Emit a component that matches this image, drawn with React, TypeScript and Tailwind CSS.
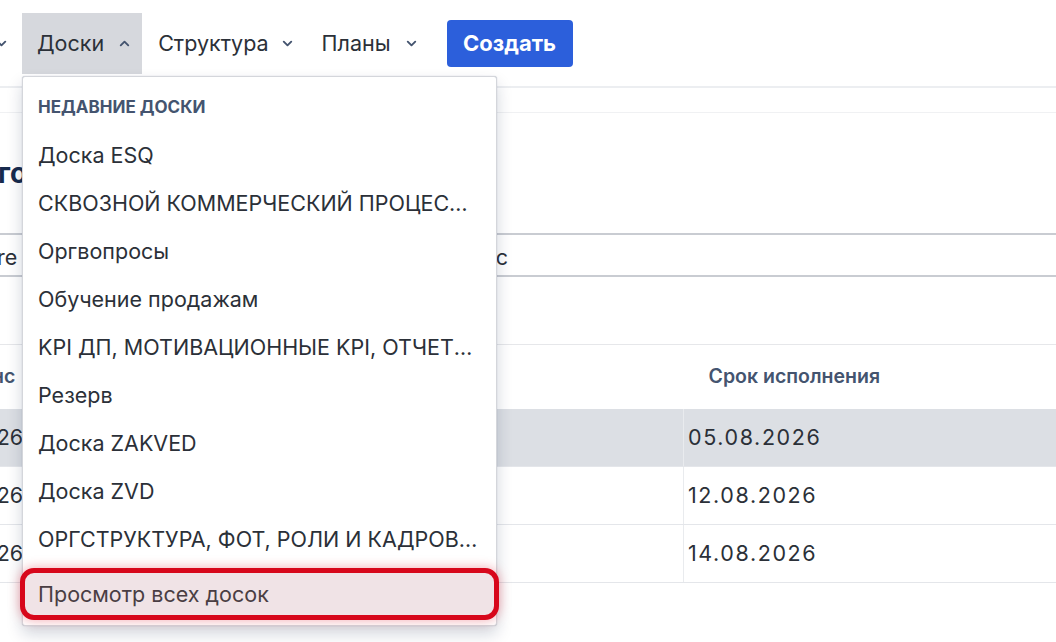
import React from 'react';
import { ChevronDown, ChevronUp } from 'lucide-react';

const recent = [
  'Доска ESQ',
  'СКВОЗНОЙ КОММЕРЧЕСКИЙ ПРОЦЕСС ПРОДАЖ',
  'Оргвопросы',
  'Обучение продажам',
  'KPI ДП, МОТИВАЦИОННЫЕ KPI, ОТЧЕТНОСТЬ',
  'Резерв',
  'Доска ZAKVED',
  'Доска ZVD',
  'ОРГСТРУКТУРА, ФОТ, РОЛИ И КАДРОВЫЙ РЕЗЕРВ',
];

const rows = [
  { date: '05.08.2026', active: true },
  { date: '12.08.2026', active: false },
  { date: '14.08.2026', active: false },
];

// ── Top navigation ─────────────────────────────────────────────
const NavBar = () => (
  <div className="flex items-center h-[88px] border-b-2 border-[#eceef1]">
    <ChevronDown size={15} strokeWidth={3} className="text-[#44546f] -ml-[6px] mr-[13px]" />
    <div className="h-[61px] flex items-center gap-[13px] pl-[15px] pr-[10px] bg-[#d6d8dd]">
      <span>Доски</span>
      <ChevronUp size={15} strokeWidth={3} className="text-[#44546f]" />
    </div>
    <div className="flex items-center gap-[11px] ml-[16px]">
      <span>Структура</span>
      <ChevronDown size={15} strokeWidth={3} className="text-[#44546f]" />
    </div>
    <div className="flex items-center gap-[13px] ml-[27px]">
      <span>Планы</span>
      <ChevronDown size={15} strokeWidth={3} className="text-[#44546f]" />
    </div>
    <button className="ml-[28px] h-[47px] w-[126px] rounded-[4px] bg-[#2c5fdb] text-white font-bold text-[22px]">
      Создать
    </button>
  </div>
);

// ── Page content behind the menu ───────────────────────────────
const Content = () => (
  <div className="flex flex-col">
    <div className="h-[25px] border-b border-[#f0f1f3]" />
    <div className="h-[120px] flex items-center">
      <span className="-ml-[2px] text-[28px] font-bold text-[#172b4d]">го</span>
    </div>
    <div className="h-[44px] border-y-2 border-[#c9ccd2] flex items-center justify-between pr-[548px] pt-[4px]">
      <span className="-ml-[3px]">re</span>
      <span>c</span>
    </div>
    <div className="h-[68px] border-b border-[#e6e7ea]" />
    <div className="h-[64px] flex items-center justify-between pr-[176px]">
      <span className="-ml-[8px] text-[19.5px] font-semibold text-[#44546f]">нс</span>
      <span className="text-[19.5px] font-semibold text-[#44546f]">Срок исполнения</span>
    </div>
    {rows.map((r, i) => (
      <div
        key={i}
        className={`h-[58px] flex items-stretch border-b border-[#e4e6ea] ${r.active ? 'bg-[#dcdfe4]' : ''}`}
      >
        <div className="w-[684px] flex items-center border-r border-[#e9ebee]">
          <span className="-ml-[30px]">2026</span>
        </div>
        <div className="flex items-center pl-[4px] tracking-[1.6px]">{r.date}</div>
      </div>
    ))}
  </div>
);

// ── Dropdown menu ──────────────────────────────────────────────
const BoardsMenu = () => (
  <div className="absolute left-[22px] top-[76px] w-[475px] bg-white border border-[#d4d6db] rounded-[3px] shadow-[0_8px_16px_rgba(9,30,66,0.18),0_0_1px_rgba(9,30,66,0.3)] pt-2 pb-[5px] text-[21.5px]">
    <div className="h-[46px] flex items-center px-[15px] text-[17px] font-bold text-[#44546f]">
      НЕДАВНИЕ ДОСКИ
    </div>
    {recent.map(b => (
      <div key={b} className="h-[48px] flex items-center px-[15px]">
        <span className="truncate">{b}</span>
      </div>
    ))}
    <div className="mt-[5px] -mx-[3px] h-[52px] flex items-center px-[13px] border-[5px] border-[#d7071b] rounded-[14px] bg-[#f0e3e6] text-[#4a3e43] shadow-[0_0_12px_rgba(215,7,27,0.35)]">
      Просмотр всех досок
    </div>
  </div>
);

export default function App() {
  return (
    <div
      className="relative w-[1056px] h-[642px] overflow-hidden bg-white text-[21.5px] text-[#2b3038]"
      style={{ fontFamily: 'Inter, "Noto Sans", sans-serif' }}
    >
      <NavBar />
      <Content />
      <BoardsMenu />
    </div>
  );
}
